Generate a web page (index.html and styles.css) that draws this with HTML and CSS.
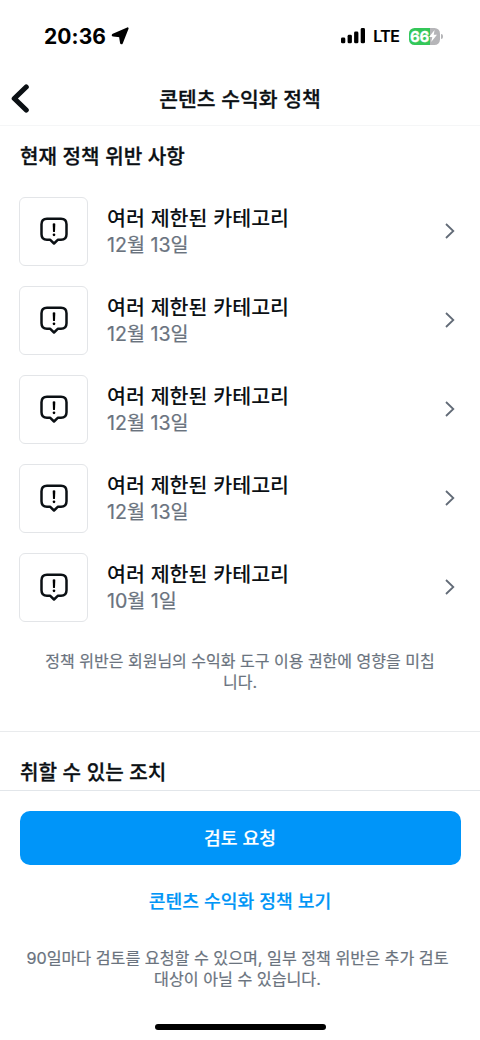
FILE: index.html
```html
<!DOCTYPE html>
<html lang="ko">
<head>
<meta charset="utf-8">
<title>콘텐츠 수익화 정책</title>
<link rel="stylesheet" href="styles.css">
</head>
<body>
<svg class="symbols" aria-hidden="true">
  <symbol id="notice" viewBox="0 0 30 30"><path d="M8 2.700h14q5.500 0 5.500 5.500v10q0 5.500-5.500 5.500h-3L15 27.500 11 23.700H8q-5.500 0-5.500-5.500v-10Q2.500 2.700 8 2.700Z" fill="none" stroke="currentColor" stroke-width="2.500" stroke-linejoin="round"/><path d="M13.700 8q0-.8 1.300-.8t1.300.8l-.3 7.700q-1 .8-2 0Z"/><circle cx="15" cy="18.800" r="1.350"/></symbol>
  <symbol id="next" viewBox="0 0 12 18"><path d="M2 2l7.300 7L2 16" fill="none" stroke="currentColor" stroke-width="1.800"/></symbol>
</svg>
<main class="screen">
  <div class="status">
    <div class="clock"><span class="time">20:36</span>
      <svg class="location" viewBox="0 0 18 18"><path d="M16.600 1.400L11 15.700Q10.300 17 10 15.700L9 9.300 2.200 8.500Q1.200 8.200 2.200 7.600Z" stroke="#000" stroke-width="2" stroke-linejoin="round"/></svg>
    </div>
    <div class="network">
      <svg class="signal" viewBox="0 0 25 16"><rect x="0" y="9.500" width="4.300" height="5.800" rx="1.400"/><rect x="6.600" y="6.800" width="4.300" height="8.500" rx="1.400"/><rect x="13.100" y="3.600" width="4.300" height="11.700" rx="1.400"/><rect x="19.700" y="0" width="4.300" height="15.300" rx="1.400"/></svg>
      <span class="lte">LTE</span>
      <div class="battery"><span>66</span><svg viewBox="0 0 8 12"><path d="M5.600 0L0 7h3.300L2.200 12 8 4.800H4.700Z" fill="#fff"/></svg></div>
    </div>
  </div>
  <header class="navbar">
    <svg class="back" viewBox="0 0 20 30"><path d="M16.200 4L4.300 15.500l11.900 11.500" fill="none" stroke="currentColor" stroke-width="5.200" stroke-linecap="round" stroke-linejoin="round"/></svg>
    <h1>콘텐츠 수익화 정책</h1>
  </header>
  <section class="violations">
    <h2>현재 정책 위반 사항</h2>
    <ul>
      <li><div class="tile"><svg><use href="#notice"/></svg></div><div class="copy"><strong>여러 제한된 카테고리</strong><span class="date">12월 13일</span></div><svg class="next"><use href="#next"/></svg></li>
      <li><div class="tile"><svg><use href="#notice"/></svg></div><div class="copy"><strong>여러 제한된 카테고리</strong><span class="date">12월 13일</span></div><svg class="next"><use href="#next"/></svg></li>
      <li><div class="tile"><svg><use href="#notice"/></svg></div><div class="copy"><strong>여러 제한된 카테고리</strong><span class="date">12월 13일</span></div><svg class="next"><use href="#next"/></svg></li>
      <li><div class="tile"><svg><use href="#notice"/></svg></div><div class="copy"><strong>여러 제한된 카테고리</strong><span class="date">12월 13일</span></div><svg class="next"><use href="#next"/></svg></li>
      <li><div class="tile"><svg><use href="#notice"/></svg></div><div class="copy"><strong>여러 제한된 카테고리</strong><span class="date">10월 1일</span></div><svg class="next"><use href="#next"/></svg></li>
    </ul>
    <p class="note impact">정책 위반은 회원님의 수익화 도구 이용 권한에 영향을 미칩<br>니다.</p>
  </section>
  <section class="actions"><h2>취할 수 있는 조치</h2></section>
  <footer class="bottom">
    <button class="review">검토 요청</button>
    <a class="policy">콘텐츠 수익화 정책 보기</a>
    <p class="note limit">90일마다 검토를 요청할 수 있으며, 일부 정책 위반은 추가 검토<br>대상이 아닐 수 있습니다.</p>
    <div class="home"></div>
  </footer>
</main>
</body>
</html>
```
FILE: styles.css
```css
* { box-sizing: border-box; }
body { margin: 0; background: #fff; color: #0b1014; font-family: "Noto Sans CJK KR", sans-serif; }
h1, h2, p, ul { margin: 0; padding: 0; }
.symbols { display: none; }
.screen { width: 480px; height: 1040px; display: flex; flex-direction: column; overflow: hidden; white-space: nowrap; }
.status { height: 72px; flex: none; display: flex; justify-content: space-between; padding: 0 38px 0 44px; color: #000; font-family: Inter, sans-serif; }
.clock, .network { display: flex; align-items: center; }
.time { font-size: 21px; font-weight: 700; letter-spacing: .1px; }
.location { width: 18px; height: 18px; margin-left: 5px; }
.signal { width: 25px; height: 16px; margin-right: 7px; }
.lte { font-size: 15.800px; font-weight: 600; -webkit-text-stroke: .2px; letter-spacing: -.4px; }
.battery { width: 31px; height: 17px; margin-left: 9px; margin-right: 2.500px; border-radius: 5.500px; background: linear-gradient(90deg, #34c759 0 20.500px, #b5b5b8 20.500px); display: flex; align-items: center; padding-left: 1.500px; position: relative; color: #fff; font-size: 15px; font-weight: 700; letter-spacing: -.2px; -webkit-text-stroke: .3px; }
.battery svg { width: 8px; height: 12px; flex: none; }
.battery::after { content: ""; position: absolute; right: -3px; top: 6px; width: 2px; height: 5px; border-radius: 0 2px 2px 0; background: #b5b5b8; }
.navbar { height: 54px; flex: none; display: grid; grid-template-columns: 40px 1fr 40px; align-items: center; border-bottom: 1px solid #f5f6f7; }
.back { width: 20px; height: 30px; margin-left: 9.500px; margin-top: -2px; }
h1, h2 { font-size: 20.100px; font-weight: 500; line-height: 30px; -webkit-text-stroke: .3px; }
h1 { justify-self: center; margin-top: -1px; font-size: 20.400px; }
.violations { height: 606px; flex: none; padding-top: 15px; border-bottom: 1px solid #e9ebed; }
.violations h2, .actions h2 { padding-left: 20px; }
ul { list-style: none; margin-top: 16px; }
li { height: 89.100px; display: flex; align-items: center; padding: 0 24px 0 19px; }
.tile { width: 69px; height: 69px; border: 1px solid #e3e5e8; border-radius: 6px; display: grid; place-items: center; margin-right: 19px; }
.tile svg { width: 30px; height: 30px; margin-top: -2px; color: #0b1014; }
.copy { flex: 1; display: flex; flex-direction: column; }
strong { font-size: 20.600px; font-weight: 500; line-height: 27px; margin-top: 1px; }
.date { font-family: Inter, "Noto Sans CJK KR", sans-serif; font-size: 19.600px; color: #6a737e; line-height: 29px; -webkit-text-stroke: .2px; }
.next { width: 12px; height: 18px; margin-top: -1px; color: #626b77; }
.note { text-align: center; font-family: Inter, "Noto Sans CJK KR", sans-serif; font-size: 16px; line-height: 21px; color: #6a737e; -webkit-text-stroke: .2px; }
.impact { margin-top: 18.500px; }
.actions { height: 59px; flex: none; padding-top: 25px; border-bottom: 1px solid #e2e6ea; }
.bottom { flex: 1; padding: 20px 20px 0; display: flex; flex-direction: column; align-items: center; }
.review { width: 441px; height: 54px; padding: 0 0 2px; border: 0; border-radius: 10px; background: #0095f9; color: #fff; font: 500 18.200px/52px "Noto Sans CJK KR", sans-serif; -webkit-text-stroke: .2px; }
.policy { margin-top: 19px; color: #0095f6; font-size: 18.200px; font-weight: 500; line-height: 32px; -webkit-text-stroke: .2px; }
.limit { margin-top: 32px; margin-right: 5px; font-size: 16.150px; }
.home { margin-top: 34px; width: 171px; height: 6px; border-radius: 3px; background: #000; }
```
